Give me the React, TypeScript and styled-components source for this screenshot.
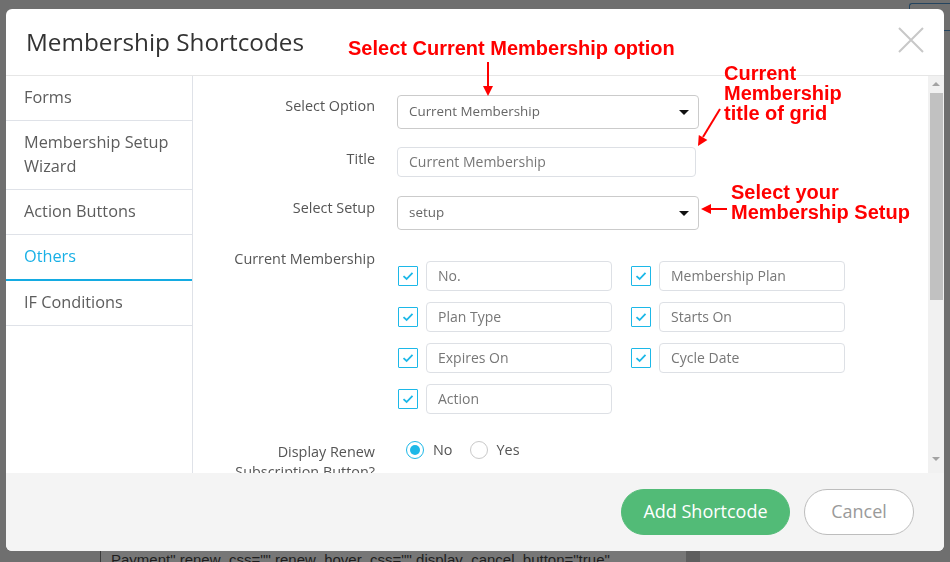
import React from "react";
import styled, { createGlobalStyle } from "styled-components";

const GlobalStyle = createGlobalStyle`
  * { box-sizing: border-box; }
  html, body {
    margin: 0;
    padding: 0;
    width: 950px;
    height: 562px;
    overflow: hidden;
    background: #6f6f6f;
  }
  body {
    font-family: "Open Sans", "Noto Sans", sans-serif;
  }
`;

/* page behind the dimmed backdrop */
const BackPage = styled.div`
  height: 562px;
  display: flex;
  flex-direction: column;
  justify-content: space-between;
`;

const BackTop = styled.div`
  display: flex;
  justify-content: flex-end;
  padding-top: 3px;
`;

const BackButton = styled.div`
  width: 41px;
  height: 28px;
  border: 1px solid #24445f;
  border-right: none;
  border-radius: 3px 0 0 3px;
`;

const BackCode = styled.div`
  height: 11px;
  width: 600px;
  margin-left: 100px;
  padding-left: 10px;
  border-left: 1px solid #3c3c3c;
  border-right: 14px solid #5e5e5e;
  background: #777;
  overflow: hidden;
  white-space: nowrap;
  font: 15px/18px "Liberation Sans", Arial, sans-serif;
  color: #1e1e1e;
`;

const Overlay = styled.div`
  position: fixed;
  inset: 0;
  padding: 9px 0 0 6px;
`;

const Modal = styled.div`
  position: relative;
  width: 938px;
  height: 542px;
  background: #fff;
  border-radius: 6px;
  overflow: hidden;
  display: flex;
  flex-direction: column;
`;

const Header = styled.div`
  height: 67px;
  flex: none;
  display: flex;
  align-items: center;
  justify-content: space-between;
  padding: 0 20px;
  border-bottom: 1px solid #e6e6e6;
`;

const Title = styled.h2`
  margin: -2px 0 0;
  font-size: 24.3px;
  font-weight: 400;
  color: #333;
`;

const CloseButton = styled.button`
  width: 26px;
  height: 26px;
  padding: 0;
  border: none;
  background: none;
  margin-top: -4px;
  display: flex;
`;

const Body = styled.div`
  height: 397px;
  flex: none;
  display: flex;
`;

const Sidebar = styled.nav`
  width: 187px;
  flex: none;
  border-right: 1px solid #dfe2e8;
`;

const NavItem = styled.div<{ $active?: boolean }>`
  padding: 9px 18px 11px;
  font-size: 16.3px;
  line-height: 24px;
  color: ${(p) => (p.$active ? "#19b0e6" : "#5c5c5c")};
  border-bottom: ${(p) => (p.$active ? "2px solid #14abe2" : "1px solid #dfe2e8")};
`;

const Content = styled.div`
  flex: 1;
  overflow: hidden;
  padding-top: 19px;
`;

const FormRow = styled.div<{ $mt?: number }>`
  display: grid;
  grid-template-columns: 182px 1fr;
  column-gap: 22px;
  margin-top: ${(p) => p.$mt ?? 0}px;
`;

const Label = styled.div<{ $pt?: number }>`
  text-align: right;
  font-size: 14.4px;
  line-height: 20px;
  color: #555;
  padding-top: ${(p) => p.$pt ?? 0}px;
`;

const Select = styled.div`
  width: 302px;
  height: 34px;
  border: 1px solid #cbcbcb;
  border-radius: 4px;
  display: flex;
  align-items: center;
  justify-content: space-between;
  padding: 0 9px 2px 11px;
  font-size: 13.4px;
  color: #666;
`;

const Caret = styled.span`
  width: 0;
  height: 0;
  margin-top: 2px;
  border-left: 5px solid transparent;
  border-right: 5px solid transparent;
  border-top: 5px solid #111;
`;

const TextInput = styled.input<{ $w: number }>`
  width: ${(p) => p.$w}px;
  height: 30px;
  border: 1px solid #dde0e5;
  border-radius: 4px;
  padding: 0 11px 1px;
  font-family: "Open Sans", "Noto Sans", sans-serif;
  font-size: 14px;
  color: #777;
  background: #fff;
  outline: none;
`;

const CheckGrid = styled.div`
  display: grid;
  grid-template-columns: 213px 213px;
  column-gap: 20px;
  row-gap: 11px;
  margin: 12px 0 0 1px;
`;

const CheckItem = styled.div`
  display: flex;
  align-items: center;
  gap: 8px;
`;

const CheckBox = styled.span`
  width: 20px;
  height: 20px;
  flex: none;
  border: 1.5px solid #1cb8e8;
  border-radius: 1px;
  display: flex;
  align-items: center;
  justify-content: center;
`;

const RadioGroup = styled.div`
  display: flex;
  align-items: center;
  gap: 17px;
  margin-left: 9px;
`;

const RadioOption = styled.label`
  display: flex;
  align-items: center;
  gap: 9px;
  font-size: 14.4px;
  line-height: 18px;
  color: #555;
`;

const RadioDot = styled.span<{ $on?: boolean }>`
  width: 18px;
  height: 18px;
  border-radius: 50%;
  border: 1px solid ${(p) => (p.$on ? "#1cb8e8" : "#c9c9c9")};
  display: flex;
  align-items: center;
  justify-content: center;
  &::after {
    content: "";
    width: 10px;
    height: 10px;
    border-radius: 50%;
    background: ${(p) => (p.$on ? "#1cb8e8" : "transparent")};
  }
`;

const ScrollTrack = styled.div`
  width: 16px;
  flex: none;
  background: #f1f1f1;
  display: flex;
  flex-direction: column;
  align-items: center;
`;

const ScrollArrow = styled.span<{ $down?: boolean }>`
  width: 0;
  height: 0;
  margin: ${(p) => (p.$down ? "auto 0 12px" : "6px 0 0")};
  border-left: 4px solid transparent;
  border-right: 4px solid transparent;
  ${(p) =>
    p.$down ? "border-top: 4px solid #a3a3a3;" : "border-bottom: 4px solid #a3a3a3;"}
`;

const ScrollThumb = styled.div`
  width: 13px;
  height: 207px;
  margin: 7px 0 0 1px;
  background: #c1c1c1;
`;

const Footer = styled.div`
  height: 78px;
  flex: none;
  background: #f4f4f4;
  display: flex;
  justify-content: flex-end;
  align-items: flex-start;
  gap: 14px;
  padding: 16px 30px 0 0;
`;

const Button = styled.button<{ $primary?: boolean }>`
  height: 46px;
  width: ${(p) => (p.$primary ? 169 : 110)}px;
  border-radius: 23px;
  border: 1px solid ${(p) => (p.$primary ? "#52bb77" : "#bdbdbd")};
  background: ${(p) => (p.$primary ? "#52bb77" : "#fff")};
  color: ${(p) => (p.$primary ? "#fff" : "#9a9a9a")};
  font-family: "Open Sans", "Noto Sans", sans-serif;
  font-size: 18px;
  padding: 0 0 2px;
  cursor: pointer;
`;

/* red callouts drawn over the dialog */
const Note = styled.div<{ $top: number; $left: number }>`
  position: absolute;
  top: ${(p) => p.$top}px;
  left: ${(p) => p.$left}px;
  font: bold 20px/20px "Liberation Sans", Arial, sans-serif;
  color: #f00;
  white-space: nowrap;
  pointer-events: none;
`;

const ArrowLayer = styled.svg`
  position: absolute;
  inset: 0;
  pointer-events: none;
`;

const Check = () => (
  <svg width="14" height="14" viewBox="0 0 14 14">
    <path d="M2.5 7.2 L5.6 10 L11.5 3.8" fill="none" stroke="#1cb8e8" strokeWidth="1.8" />
  </svg>
);

const columns = ["No.", "Membership Plan", "Plan Type", "Starts On", "Expires On", "Cycle Date", "Action"];

const navItems = ["Forms", "Membership Setup Wizard", "Action Buttons", "Others", "IF Conditions"];

export default function App() {
  return (
    <>
      <GlobalStyle />
      <BackPage>
        <BackTop>
          <BackButton />
        </BackTop>
        <BackCode>Payment" renew_css="" renew_hover_css="" display_cancel_button="true"</BackCode>
      </BackPage>
      <Overlay>
        <Modal>
          <Header>
            <Title>Membership Shortcodes</Title>
            <CloseButton aria-label="Close">
              <svg width="26" height="26" viewBox="0 0 26 26">
                <path d="M1 1 L25 25 M25 1 L1 25" stroke="#c8c8c8" strokeWidth="2" />
              </svg>
            </CloseButton>
          </Header>
          <Body>
            <Sidebar>
              {navItems.map((n) => (
                <NavItem key={n} $active={n === "Others"}>
                  {n === "Membership Setup Wizard" ? (
                    <>
                      Membership Setup
                      <br />
                      Wizard
                    </>
                  ) : (
                    n
                  )}
                </NavItem>
              ))}
            </Sidebar>
            <Content>
              <FormRow>
                <Label $pt={1}>Select Option</Label>
                <Select>
                  Current Membership
                  <Caret />
                </Select>
              </FormRow>
              <FormRow $mt={18}>
                <Label $pt={2}>Title</Label>
                <TextInput $w={299} defaultValue="Current Membership" />
              </FormRow>
              <FormRow $mt={19}>
                <Label $pt={2}>Select Setup</Label>
                <Select>
                  setup
                  <Caret />
                </Select>
              </FormRow>
              <FormRow $mt={19}>
                <Label>Current Membership</Label>
                <CheckGrid>
                  {columns.map((c) => (
                    <CheckItem key={c}>
                      <CheckBox>
                        <Check />
                      </CheckBox>
                      <TextInput $w={186} defaultValue={c} />
                    </CheckItem>
                  ))}
                </CheckGrid>
              </FormRow>
              <FormRow $mt={27}>
                <Label $pt={1}>
                  Display Renew
                  <br />
                  Subscription Button?
                </Label>
                <div>
                  <RadioGroup>
                    <RadioOption>
                      <RadioDot $on />
                      No
                    </RadioOption>
                    <RadioOption>
                      <RadioDot />
                      Yes
                    </RadioOption>
                  </RadioGroup>
                </div>
              </FormRow>
            </Content>
            <ScrollTrack>
              <ScrollArrow />
              <ScrollThumb />
              <ScrollArrow $down />
            </ScrollTrack>
          </Body>
          <Footer>
            <Button $primary>Add Shortcode</Button>
            <Button>Cancel</Button>
          </Footer>

          <Note $top={29} $left={342}>Select Current Membership option</Note>
          <Note $top={54} $left={718}>
            Current
            <br />
            Membership
            <br />
            title of grid
          </Note>
          <Note $top={173} $left={725}>
            Select your
            <br />
            Membership Setup
          </Note>
          <ArrowLayer width="938" height="542" viewBox="0 0 938 542">
            <g stroke="#f00" strokeWidth="2" fill="#f00">
              <line x1="482" y1="53" x2="482" y2="78" />
              <polygon points="477,77 487,77 482,87" stroke="none" />
              <line x1="714" y1="100" x2="697" y2="128" />
              <polygon points="701.4,131 692.8,125.9 692,137" stroke="none" />
              <line x1="721" y1="200" x2="704" y2="200" />
              <polygon points="705,195 705,205 695,200" stroke="none" />
            </g>
          </ArrowLayer>
        </Modal>
      </Overlay>
    </>
  );
}
